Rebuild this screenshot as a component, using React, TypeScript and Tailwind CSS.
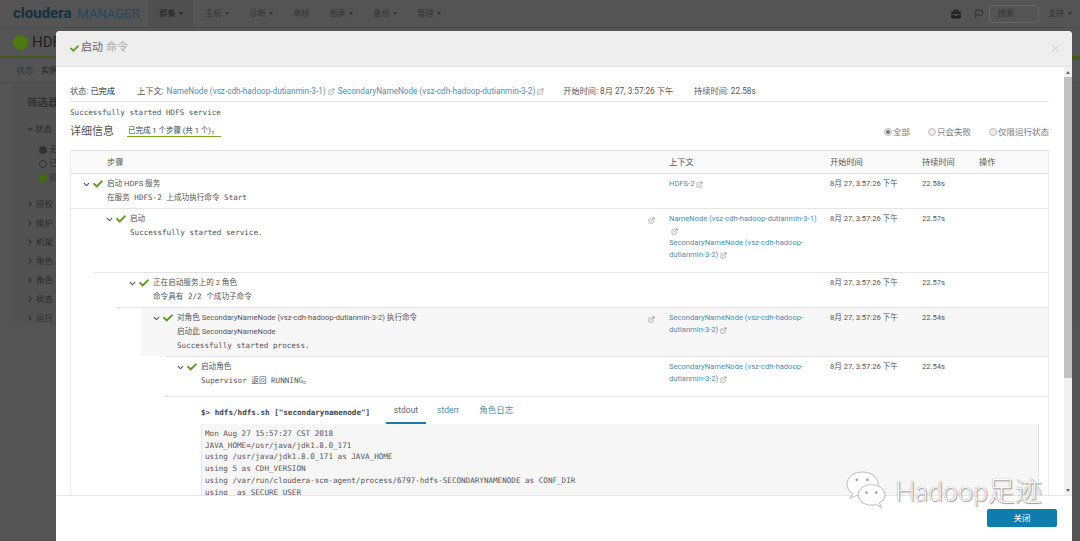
import React from "react";
import { ExternalLink, Flag, X } from "lucide-react";
import { FaBriefcase, FaCheck, FaChevronDown, FaChevronRight } from "react-icons/fa";

const sans = "font-[Roboto,'Noto_Sans_CJK_SC',sans-serif]";
const mono = "font-['DejaVu_Sans_Mono','Noto_Sans_CJK_SC',monospace]";
const linkColor = "text-[#4d8fac]";

const Ext = ({ className = "" }: { className?: string }) => (
  <ExternalLink size={7} strokeWidth={1.6} className={`inline-block text-[#666] ${className}`} />
);

const Caret = () => (
  <span className="ml-1 inline-block border-x-[2.5px] border-t-[3px] border-x-transparent border-t-current align-middle" />
);

const Radio = ({ on = false }: { on?: boolean }) => (
  <span className="flex h-[8px] w-[8px] items-center justify-center rounded-full border border-[#bbb] bg-[#eee]">
    {on && <span className="h-[4px] w-[4px] rounded-full bg-[#777]" />}
  </span>
);

type StepProps = {
  line: string;
  box?: string;
  pad: string;
  height: string;
  title: string;
  lines: React.ReactNode;
  rowIcon?: boolean;
  context?: React.ReactNode;
  time: string;
  duration: string;
};

const Step = ({ line, box = "", pad, height, title, lines, rowIcon, context, time, duration }: StepProps) => (
  <div className={`border-t border-[#e4e4e4] ${line}`}>
    <div className={`flex text-[7.6px] text-[#555] ${box} ${height}`}>
      <div className={`flex flex-1 items-start pt-[3px] ${pad}`}>
        <span className="flex h-[14px] w-[24px] shrink-0 items-center gap-[3px]">
          <FaChevronDown size={7} className="text-[#555]" />
          <FaCheck size={10} className="text-[#5c9e24]" />
        </span>
        <div className="flex-1 leading-[14px]">
          <div>{title}</div>
          {lines}
        </div>
        {rowIcon && <Ext className="mr-[14px] mt-[5px]" />}
      </div>
      <div className={`w-[161px] shrink-0 pr-[8px] pt-[4px] leading-[12px] ${linkColor}`}>{context}</div>
      <div className="w-[92px] shrink-0 pt-[4px]">{time}</div>
      <div className="w-[126px] shrink-0 pt-[4px]">{duration}</div>
    </div>
  </div>
);

const sideRows = ["授权", "维护", "机架", "角色", "角色", "状态", "运行"];

export default function App() {
  return (
    <div className={`relative h-[541px] w-[1080px] overflow-hidden bg-[#545454] text-[8.5px] ${sans}`}>
      {/* page behind the dialog */}
      <div className="flex h-[28px] items-center border-b border-[#4a4a4a] pl-[13px] pr-[8px] text-[8px] text-[#333]">
        <span className="text-[15px] font-bold leading-none text-[#12303f]">cloudera</span>
        <span className="ml-[6px] text-[13px] leading-none text-[#1e4a60]">MANAGER</span>
        <div className="ml-[10px] flex h-full items-center bg-[#4f4f4f] px-[10px] text-[#222]">
          群集
          <Caret />
        </div>
        <div className="ml-[12px] flex gap-[20px]">
          <span>主机<Caret /></span>
          <span>诊断<Caret /></span>
          <span>审核</span>
          <span>图表<Caret /></span>
          <span>备份<Caret /></span>
          <span>管理<Caret /></span>
        </div>
        <div className="ml-auto flex items-center">
          <FaBriefcase size={10} className="text-[#222]" />
          <Flag size={10} className="ml-[13px] text-[#2a2a2a]" />
          <div className="ml-[5px] h-[18px] w-[50px] rounded-sm border border-[#666] pl-[8px] leading-[16px] text-[#333]">搜索</div>
          <span className="ml-[9px]">支持<Caret /></span>
        </div>
      </div>
      <div className="flex h-[30px] items-center border-b-2 border-[#3f5a12] pl-[13px]">
        <span className="h-[15px] w-[15px] rounded-full bg-[#4c7a10]" />
        <span className="ml-[4px] text-[15px] text-[#222]">HDFS</span>
      </div>
      <div className="flex h-[25px] items-center gap-[8px] border-b border-[#4c4c4c] pl-[16px] text-[#2a3a44]">
        <span>状态</span>
        <span className="text-[#1c1c1c]">实例</span>
      </div>
      <div className="ml-[14px] flex flex-col bg-[#525252] pl-[13px] pt-[12px] text-[#2b2b2b]">
        <div className="text-[10.5px] font-medium">筛选器</div>
        <div className="mt-[12px] flex items-center gap-[2px]">
          <FaChevronDown size={6} />
          状态
        </div>
        <div className="mt-[9px] flex flex-col gap-[4px] pl-[12px]">
          <div className="flex h-[10px] items-center gap-[2px]"><span className="h-[8px] w-[8px] rounded-full bg-[#333]" />无</div>
          <div className="flex h-[10px] items-center gap-[2px]"><span className="h-[8px] w-[8px] rounded-full border border-[#333]" />已</div>
          <div className="flex h-[10px] items-center gap-[2px]"><span className="h-[8px] w-[8px] rounded-full bg-[#3f6e0a]" />运</div>
        </div>
        <div className="mt-[16px] flex flex-col gap-[8px]">
          {sideRows.map((name, i) => (
            <div key={i} className="flex h-[11px] items-center gap-[3px]">
              <FaChevronRight size={6} />
              {name}
            </div>
          ))}
        </div>
      </div>

      {/* dialog */}
      <div className="absolute left-[56px] top-[31px] flex h-[560px] w-[1016px] flex-col rounded-[4px] bg-white">
        <div className="flex h-[36px] shrink-0 items-center rounded-t-[4px] border-b border-[#e3e3e3] bg-[#efeeef] pl-[14px] pr-[10px]">
          <FaCheck size={9} className="text-[#5c9e24]" />
          <span className="ml-[2px] text-[11px] text-[#666]">启动</span>
          <span className="ml-[3px] text-[11px] text-[#aaa]">命令</span>
          <X size={13} strokeWidth={1.5} className="ml-auto text-[#c4c4c4]" />
        </div>

        <div className="flex h-[428px] shrink-0 overflow-hidden">
          <div className="min-w-0 flex-1 overflow-hidden pl-[14px] pr-[15px]">
            <div className="mt-[18px] flex h-[17px] items-start border-b border-[#e6e6e6] text-[8.2px] text-[#555]">
              <span className="w-[67px]">
                状态: <span className="text-[#222]">已完成</span>
              </span>
              <span>上下文:</span>
              <span className={`ml-[3px] ${linkColor}`}>NameNode (vsz-cdh-hadoop-dutianmin-3-1)</span>
              <Ext className="ml-[2px] mt-[3px]" />
              <span className={`ml-[3px] ${linkColor}`}>SecondaryNameNode (vsz-cdh-hadoop-dutianmin-3-2)</span>
              <Ext className="ml-[2px] mt-[3px]" />
              <span className="ml-[19px]">开始时间: 8月 27, 3:57:26 下午</span>
              <span className="ml-[21px]">持续时间: 22.58s</span>
            </div>
            <div className={`mt-[6px] text-[7.6px] leading-[10px] text-[#555] ${mono}`}>Successfully started HDFS service</div>
            <div className="mt-[5px] flex h-[18px] items-center text-[#555]">
              <span className="text-[11px] text-[#555]">详细信息</span>
              <span className="ml-[13px] h-[14px] self-start border-b border-[#76a81f] pl-[1px] pr-[3px] pt-[2px] text-[7.5px] text-[#444]">
                已完成 1 个步骤 (共 1 个)，
              </span>
              <div className="ml-auto flex items-center text-[#777]">
                <Radio on />
                <span className="ml-[1px]">全部</span>
                <span className="ml-[18px]"><Radio /></span>
                <span className="ml-[1px]">只会失败</span>
                <span className="ml-[18px]"><Radio /></span>
                <span className="ml-[1px]">仅限运行状态</span>
              </div>
            </div>

            <div className="mt-[9px] border-x border-[#ececec]">
              <div className="flex h-[23px] items-center border-t border-[#e4e4e4] bg-[#f9f9f9] text-[8.2px] text-[#555]">
                <span className="flex-1 pl-[36px]">步骤</span>
                <span className="w-[161px] shrink-0">上下文</span>
                <span className="w-[92px] shrink-0">开始时间</span>
                <span className="w-[57px] shrink-0">持续时间</span>
                <span className="w-[69px] shrink-0">操作</span>
              </div>

              <Step
                line=""
                pad="pl-[12px]"
                height="h-[34px]"
                title="启动 HDFS 服务"
                lines={<div className={`text-[7.6px] ${mono}`}>在服务 HDFS-2 上成功执行命令 Start</div>}
                context={<>HDFS-2 <Ext /></>}
                time="8月 27, 3:57:26 下午"
                duration="22.58s"
              />
              <Step
                line=""
                pad="pl-[35px]"
                height="h-[63px]"
                title="启动"
                lines={<div className={`text-[7.6px] ${mono}`}>Successfully started service.</div>}
                rowIcon
                context={
                  <>
                    NameNode (vsz-cdh-hadoop-dutianmin-3-1)
                    <div className="pl-[2px]"><Ext /></div>
                    SecondaryNameNode (vsz-cdh-hadoop-dutianmin-3-2) <Ext />
                  </>
                }
                time="8月 27, 3:57:26 下午"
                duration="22.57s"
              />
              <Step
                line="ml-[23px]"
                pad="pl-[35px]"
                height="h-[34px]"
                title="正在启动服务上的 2 角色"
                lines={<div className={`text-[7.6px] ${mono}`}>命令具有 2/2 个成功子命令</div>}
                time="8月 27, 3:57:26 下午"
                duration="22.57s"
              />
              <Step
                line="ml-[46px]"
                box="ml-[24px] bg-[#f7f7f7]"
                pad="pl-[12px]"
                height="h-[48px]"
                title="对角色 SecondaryNameNode (vsz-cdh-hadoop-dutianmin-3-2) 执行命令"
                lines={
                  <>
                    <div>启动此 SecondaryNameNode</div>
                    <div className={`text-[7.6px] ${mono}`}>Successfully started process.</div>
                  </>
                }
                rowIcon
                context={<>SecondaryNameNode (vsz-cdh-hadoop-dutianmin-3-2) <Ext /></>}
                time="8月 27, 3:57:26 下午"
                duration="22.54s"
              />
              <Step
                line="ml-[94px]"
                pad="pl-[12px]"
                height="h-[39px]"
                title="启动角色"
                lines={<div className={`text-[7.6px] ${mono}`}>Supervisor 返回 RUNNING。</div>}
                context={<>SecondaryNameNode (vsz-cdh-hadoop-dutianmin-3-2) <Ext /></>}
                time="8月 27, 3:57:26 下午"
                duration="22.54s"
              />

              <div className="ml-[94px] border-t border-[#e4e4e4] pl-[36px] pr-[9px]">
                <div className="flex h-[27px] items-end">
                  <span className={`w-[185px] pb-[6px] text-[7.6px] font-bold text-[#444] ${mono}`}>$&gt; hdfs/hdfs.sh ["secondarynamenode"]</span>
                  <span className="w-[40px] border-b-2 border-[#1a7aa8] pb-[5px] text-center text-[#666]">stdout</span>
                  <span className={`ml-[11px] pb-[7px] ${linkColor}`}>stderr</span>
                  <span className={`ml-[20px] pb-[7px] ${linkColor}`}>角色日志</span>
                </div>
                <pre className={`h-[90px] border-x border-[#e6e6e6] bg-[#f6f6f6] pl-[3px] pt-[4px] text-[7.6px] leading-[11.7px] text-[#555] ${mono}`}>
                  {`Mon Aug 27 15:57:27 CST 2018
JAVA_HOME=/usr/java/jdk1.8.0_171
using /usr/java/jdk1.8.0_171 as JAVA_HOME
using 5 as CDH_VERSION
using /var/run/cloudera-scm-agent/process/6797-hdfs-SECONDARYNAMENODE as CONF_DIR
using  as SECURE_USER`}
                </pre>
              </div>
            </div>
          </div>

          <div className="flex w-[8px] shrink-0 flex-col items-center bg-[#f1f1f1]">
            <span className="mt-[4px] h-0 w-0 border-x-[2px] border-b-[3px] border-x-transparent border-b-[#666]" />
            <div className="mt-[3px] h-[301px] w-full bg-[#c1c1c1]" />
            <span className="mb-[3px] mt-auto h-0 w-0 border-x-[2px] border-t-[3px] border-x-transparent border-t-[#666]" />
          </div>
        </div>

        <div className="flex flex-1 items-start justify-end border-t border-[#e6e6e6] pr-[15px] pt-[13px]">
          <button className="h-[18px] w-[70px] rounded-[2px] bg-[#0f7cad] text-center text-[8.5px] leading-[18px] text-white">关闭</button>
        </div>
      </div>

      {/* watermark */}
      <div className="absolute left-[842px] top-[471px] flex items-center">
        <svg width="47" height="39" viewBox="0 0 48 40" fill="white" stroke="#aaa" strokeWidth="0.8">
          <path d="M21 1c-9 0-16 5.500-16 12.500 0 4 2.300 7.500 6 9.800l-3 4.700 7-3c2 .5 4 .7 6 .7 9 0 16-5.500 16-12.200C37 6.500 30 1 21 1z" />
          <path d="M30 14c-7.500 0-13.500 4.800-13.500 10.500S22.500 35 30 35c1.500 0 3-.2 4.500-.6l6 3.300-2.200-5c3.500-2 5.700-5 5.700-8.200C44 18.800 37.500 14 30 14z" />
          <circle cx="15" cy="9" r="1.300" fill="#999" stroke="none" />
          <circle cx="26" cy="9" r="1.300" fill="#999" stroke="none" />
          <circle cx="25" cy="22" r="1.300" fill="#999" stroke="none" />
          <circle cx="35" cy="22" r="1.300" fill="#999" stroke="none" />
        </svg>
        <span className="ml-[6px] font-['Lato','Noto_Sans_CJK_SC',sans-serif] text-[27px] font-light leading-none text-white [text-shadow:0_0_1px_#777,1px_1px_1px_#999]">
          Hadoop足迹
        </span>
      </div>

      {/* right of the dialog */}
      <div className="absolute left-[1072px] top-[58px] h-[2px] w-[8px] bg-[#3f5a12]" />
    </div>
  );
}
